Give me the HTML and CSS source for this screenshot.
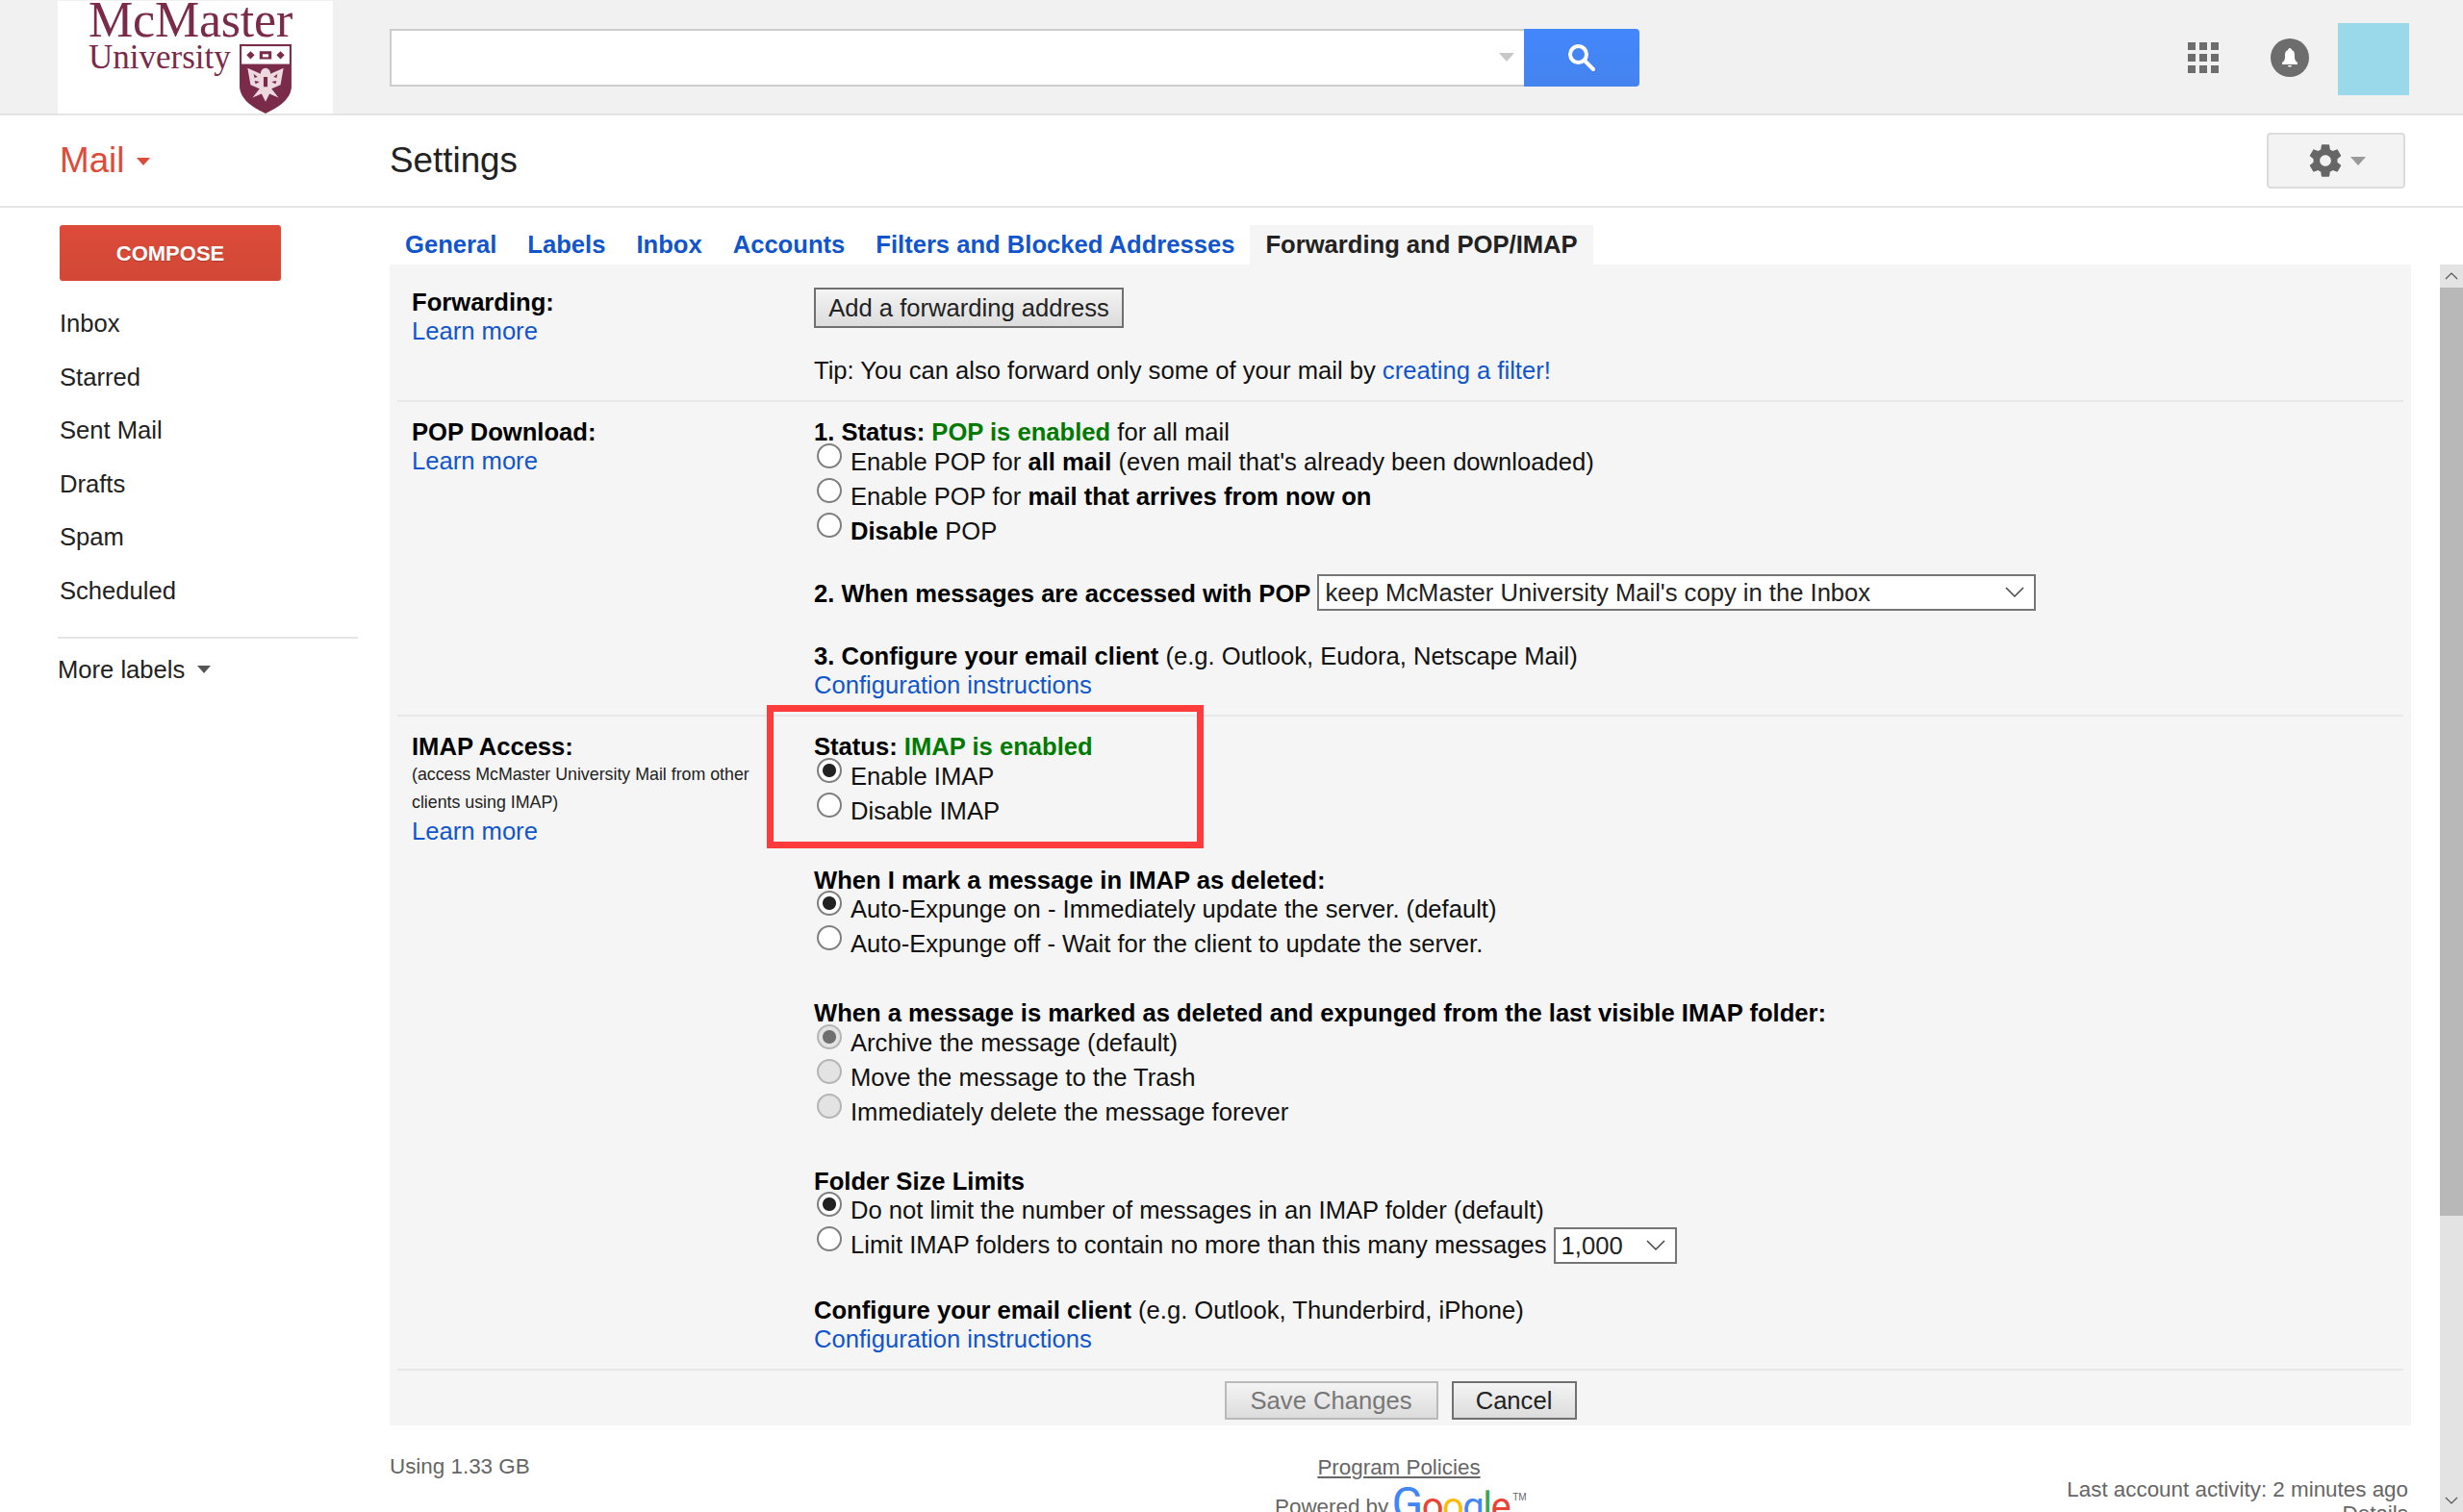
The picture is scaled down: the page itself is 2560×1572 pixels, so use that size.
FILE: index.html
```html
<!DOCTYPE html>
<html lang="en">
<head>
    <meta charset="UTF-8">
    <title>McMaster University Mail - Settings</title>
    <link rel="stylesheet" href="styles.css">
</head>
<body>

<header class="topbar">
    <div class="logo">
        <div class="logo-name">McMaster</div>
        <div class="logo-row">
            <span class="logo-uni">University</span>
            <svg class="logo-shield" width="56" height="74" viewBox="0 0 54 72" preserveAspectRatio="none">
                <path d="M1 1h52v42c0 14-14 22-26 28C15 65 1 57 1 43z" fill="#7a2b4a"/>
                <rect x="3" y="3" width="48" height="18" fill="#fff"/>
                <path d="M8 12l4-4 4 4-4 4zM38 12l4-4 4 4-4 4zM21 8h12v8H21z" fill="#7a2b4a"/>
                <path d="M24 11h6v3h-6z" fill="#fff"/>
                <path d="M27 25c-3 0-5 3-5 6L9 25l3 17 9 4-7 9 9-4 4 8 4-8 9 4-7-9 9-4 3-17-13 6c0-3-2-6-5-6z" fill="#eed8e0"/>
                <path d="M15 31l4 3-3 1zM39 31l-4 3 3 1zM16 38l5 1-4 2zM38 38l-5 1 4 2zM25 34h4v10h-4z" fill="#7a2b4a"/>
            </svg>
        </div>
    </div>
    <div class="search">
        <div class="search-box"><span class="search-arrow"></span></div>
        <div class="search-btn">
            <svg width="32" height="32" viewBox="0 0 32 32" fill="none" stroke="#fff" stroke-width="4">
                <circle cx="12.5" cy="12.5" r="8.5"/>
                <path d="M19 19l9 9" stroke-linecap="round"/>
            </svg>
        </div>
    </div>
    <div class="top-icons">
        <div class="apps">
            <i></i><i></i><i></i><i></i><i></i><i></i><i></i><i></i><i></i>
        </div>
        <svg class="bell" width="40" height="40" viewBox="0 0 40 40">
            <circle cx="20" cy="20" r="20" fill="#6d6d6d"/>
            <path d="M20 10c-1 0-2 1-2 2-3 1-3 4-3 7 0 3-1 5-3 6v2h16v-2c-2-1-3-3-3-6 0-3 0-6-3-7 0-1-1-2-2-2zM18 28h4c0 1-1 1.500-2 1.500s-2-.5-2-1.500z" fill="#fff"/>
        </svg>
        <div class="avatar"></div>
    </div>
</header>

<div class="titlebar">
    <div class="app-name">Mail <span class="app-arrow"></span></div>
    <div class="page-title">Settings</div>
    <div class="gear-btn">
        <svg width="40" height="40" viewBox="0 0 24 24" fill="#666">
            <path d="M19.43 12.98c.04-.32.07-.64.07-.98s-.03-.66-.07-.98l2.11-1.65c.19-.15.24-.42.12-.64l-2-3.46c-.12-.22-.39-.3-.61-.22l-2.49 1c-.52-.4-1.08-.73-1.69-.98l-.38-2.65C14.46 2.18 14.25 2 14 2h-4c-.25 0-.46.18-.49.42l-.38 2.65c-.61.25-1.17.59-1.69.98l-2.49-1c-.23-.09-.49 0-.61.22l-2 3.46c-.13.22-.07.49.12.64l2.11 1.65c-.04.32-.07.65-.07.98s.03.66.07.98l-2.11 1.65c-.19.15-.24.42-.12.64l2 3.46c.12.22.39.3.61.22l2.49-1c.52.4 1.08.73 1.69.98l.38 2.65c.03.24.24.42.49.42h4c.25 0 .46-.18.49-.42l.38-2.65c.61-.25 1.17-.59 1.69-.98l2.49 1c.23.09.49 0 .61-.22l2-3.46c.12-.22.07-.49-.12-.64l-2.11-1.65zM12 15.500c-1.93 0-3.500-1.570-3.500-3.500s1.570-3.500 3.500-3.500 3.500 1.570 3.500 3.500-1.570 3.500-3.500 3.500z"/>
        </svg>
        <span class="gear-arrow"></span>
    </div>
</div>

<div class="main">
    <nav class="sidebar">
        <div class="compose">COMPOSE</div>
        <ul class="labels">
            <li>Inbox</li>
            <li>Starred</li>
            <li>Sent Mail</li>
            <li>Drafts</li>
            <li>Spam</li>
            <li>Scheduled</li>
        </ul>
        <div class="more-labels">More labels <span class="more-arrow"></span></div>
    </nav>

    <div class="content">
        <div class="tabs">
            <a class="tab">General</a>
            <a class="tab">Labels</a>
            <a class="tab">Inbox</a>
            <a class="tab">Accounts</a>
            <a class="tab">Filters and Blocked Addresses</a>
            <a class="tab active">Forwarding and POP/IMAP</a>
        </div>

        <div class="panel">
            <section class="row row-forward">
                <div class="row-label">
                    <b>Forwarding:</b>
                    <a>Learn more</a>
                </div>
                <div class="row-body">
                    <button class="btn btn-add">Add a forwarding address</button>
                    <p class="tip">Tip: You can also forward only some of your mail by <a>creating a filter!</a></p>
                </div>
            </section>

            <section class="row row-pop">
                <div class="row-label">
                    <b>POP Download:</b>
                    <a>Learn more</a>
                </div>
                <div class="row-body">
                    <div class="line pop-status"><b>1. Status: <span class="green">POP is enabled</span></b> for all mail</div>
                    <label class="opt"><input type="radio" name="pop"><span>Enable POP for <b>all mail</b> (even mail that's already been downloaded)</span></label>
                    <label class="opt"><input type="radio" name="pop"><span>Enable POP for <b>mail that arrives from now on</b></span></label>
                    <label class="opt"><input type="radio" name="pop"><span><b>Disable</b> POP</span></label>
                    <div class="line select-line">
                        <b>2. When messages are accessed with POP</b>
                        <select class="sel sel-wide"><option>keep McMaster University Mail's copy in the Inbox</option></select>
                    </div>
                    <div class="line pop-client"><b>3. Configure your email client</b> (e.g. Outlook, Eudora, Netscape Mail)</div>
                    <a class="line">Configuration instructions</a>
                </div>
            </section>

            <section class="row row-imap">
                <div class="row-label">
                    <b>IMAP Access:</b>
                    <small>(access McMaster University Mail from other clients using IMAP)</small>
                    <a>Learn more</a>
                </div>
                <div class="row-body">
                    <div class="head"><b>Status: <span class="green">IMAP is enabled</span></b></div>
                    <label class="opt"><input type="radio" name="imap" checked><span>Enable IMAP</span></label>
                    <label class="opt"><input type="radio" name="imap"><span>Disable IMAP</span></label>

                    <div class="head block-top"><b>When I mark a message in IMAP as deleted:</b></div>
                    <label class="opt"><input type="radio" name="expunge" checked><span>Auto-Expunge on - Immediately update the server. (default)</span></label>
                    <label class="opt"><input type="radio" name="expunge"><span>Auto-Expunge off - Wait for the client to update the server.</span></label>

                    <div class="head block-top"><b>When a message is marked as deleted and expunged from the last visible IMAP folder:</b></div>
                    <label class="opt"><input type="radio" name="del" checked disabled><span>Archive the message (default)</span></label>
                    <label class="opt"><input type="radio" name="del" disabled><span>Move the message to the Trash</span></label>
                    <label class="opt"><input type="radio" name="del" disabled><span>Immediately delete the message forever</span></label>

                    <div class="head folder-top"><b>Folder Size Limits</b></div>
                    <label class="opt"><input type="radio" name="size" checked><span>Do not limit the number of messages in an IMAP folder (default)</span></label>
                    <label class="opt opt-tall"><input type="radio" name="size"><span>Limit IMAP folders to contain no more than this many messages</span>
                        <select class="sel sel-small"><option>1,000</option></select>
                    </label>

                    <div class="line client-top"><b>Configure your email client</b> (e.g. Outlook, Thunderbird, iPhone)</div>
                    <a class="line">Configuration instructions</a>
                </div>
            </section>

            <div class="actions">
                <button class="btn btn-save" disabled>Save Changes</button>
                <button class="btn btn-cancel">Cancel</button>
            </div>
        </div>

        <footer class="footer">
            <div class="foot-left">Using 1.33 GB</div>
            <div class="foot-mid">
                <div class="policies">Program Policies</div>
                <div class="powered">Powered by
                    <span class="google"><span class="g-blue g-cap">G</span><span class="g-red">o</span><span class="g-yellow">o</span><span class="g-blue">g</span><span class="g-green">l</span><span class="g-red">e</span></span><span class="tm">TM</span>
                </div>
            </div>
            <div class="foot-right">
                <div>Last account activity: 2 minutes ago</div>
                <div>Details</div>
            </div>
        </footer>

        <div class="callout"></div>
    </div>

    <div class="scrollbar">
        <div class="scroll-up"><svg width="14" height="10" viewBox="0 0 14 10" fill="none" stroke="#555" stroke-width="1.200"><path d="M1 8l6-6 6 6"/></svg></div>
        <div class="scroll-thumb"></div>
        <div class="scroll-track"></div>
        <div class="scroll-down"><svg width="14" height="10" viewBox="0 0 14 10" fill="none" stroke="#555" stroke-width="1.200"><path d="M1 2l6 6 6-6"/></svg></div>
    </div>
</div>

</body>
</html>
```

FILE: styles.css
```css
html, body {
    margin: 0;
    height: 1572px;
    overflow: hidden;
}
body {
    font-family: "Liberation Sans", Arial, sans-serif;
    font-size: 25.6px;
    line-height: 30px;
    color: #222;
    background: #fff;
}
a {
    color: #1155cc;
}
b {
    color: #000;
}
p {
    margin: 0;
}

/* top bar */
.topbar {
    display: flex;
    height: 118px;
    background: #f1f1f1;
    border-bottom: 2px solid #e5e5e5;
}
.logo {
    width: 286px;
    height: 117px;
    margin: 1px 0 0 60px;
    padding-left: 32px;
    box-sizing: border-box;
    background: #fff;
    color: #7a2b4a;
    font-family: "Liberation Serif", serif;
    overflow: hidden;
}
.logo-name {
    font-size: 52px;
    line-height: 40px;
    letter-spacing: -0.2px;
}
.logo-row {
    display: flex;
    gap: 8px;
    margin-top: 4px;
}
.logo-uni {
    font-size: 35px;
    line-height: 30px;
}
.search {
    display: flex;
    margin: 30px 0 0 59px;
    height: 60px;
}
.search-box {
    position: relative;
    width: 1179px;
    box-sizing: border-box;
    background: #fff;
    border: 2px solid #cdcdcd;
    border-right: none;
}
.search-arrow {
    position: absolute;
    right: 10px;
    top: 23px;
    border-left: 8px solid transparent;
    border-right: 8px solid transparent;
    border-top: 9px solid #c8c8c8;
}
.search-btn {
    display: flex;
    width: 120px;
    align-items: center;
    justify-content: center;
    background: linear-gradient(#4387fd, #4583ee);
    border-radius: 0 4px 4px 0;
}
.top-icons {
    display: flex;
    margin-left: auto;
    margin-right: 56px;
    padding-top: 24px;
}
.apps {
    display: grid;
    grid-template-columns: repeat(3, 8px);
    grid-auto-rows: 8px;
    gap: 4px;
    margin: 20px 54px 0 0;
    height: 32px;
}
.apps i {
    background: #6d6d6d;
}
.bell {
    margin: 16px 30px 0 0;
}
.avatar {
    width: 74px;
    height: 75px;
    background: #9ad9ea;
}

/* title row */
.titlebar {
    display: flex;
    align-items: center;
    height: 94px;
    border-bottom: 2px solid #e5e5e5;
}
.app-name {
    width: 342px;
    margin-left: 62px;
    color: #dd4b39;
    font-size: 36.8px;
    line-height: 40px;
}
.app-arrow {
    display: inline-block;
    margin-left: 2px;
    vertical-align: 7px;
    border-left: 7px solid transparent;
    border-right: 7px solid transparent;
    border-top: 8px solid #dd4b39;
}
.page-title {
    margin-left: 1px;
    color: #222;
    font-size: 36.8px;
    line-height: 40px;
}
.gear-btn {
    display: flex;
    align-items: center;
    justify-content: center;
    gap: 6px;
    width: 144px;
    height: 58px;
    margin-left: auto;
    margin-right: 60px;
    box-sizing: border-box;
    background: #f3f3f3;
    border: 2px solid #dcdcdc;
    border-radius: 4px;
}
.gear-arrow {
    border-left: 8px solid transparent;
    border-right: 8px solid transparent;
    border-top: 9px solid #999;
}

/* sidebar */
.main {
    position: relative;
    display: flex;
}
.sidebar {
    width: 405px;
    flex-shrink: 0;
    box-sizing: border-box;
    padding: 18px 33px 0 60px;
}
.compose {
    width: 230px;
    height: 58px;
    margin-left: 2px;
    background: linear-gradient(#dd4b39, #d14836);
    border-radius: 3px;
    color: #fff;
    font-size: 22px;
    font-weight: bold;
    line-height: 60px;
    text-align: center;
    text-shadow: 0 1px 1px rgba(0, 0, 0, 0.2);
}
.labels {
    list-style: none;
    margin: 17px 0 0;
    padding: 0 0 19.500px 2px;
    border-bottom: 2px solid #e5e5e5;
}
.labels li {
    height: 55.6px;
    line-height: 55.6px;
}
.more-labels {
    margin-top: 17px;
    line-height: 30px;
}
.more-arrow {
    display: inline-block;
    margin-left: 6px;
    vertical-align: 5px;
    border-left: 7px solid transparent;
    border-right: 7px solid transparent;
    border-top: 8px solid #555;
}

/* settings */
.content {
    width: 2101px;
    flex-shrink: 0;
}
.tabs {
    display: flex;
    height: 41px;
    margin-top: 18px;
}
.tab {
    padding: 0 16px;
    color: #1155cc;
    font-weight: bold;
    line-height: 41px;
}
.tab.active {
    color: #222;
    background: #f5f5f5;
}
.panel {
    background: #f5f5f5;
    padding: 0 8px;
    color: #111;
}
.row {
    display: flex;
    border-bottom: 2px solid #e8e8e8;
}
.row-forward {
    padding: 22px 0 16px;
}
.row-forward .row-label {
    padding-top: 2px;
}
.row-pop {
    padding: 16px 0 16px;
}
.row-imap {
    padding: 16px 0 16px;
}
.row-label {
    width: 433px;
    flex-shrink: 0;
    box-sizing: border-box;
    padding: 0 35px 0 15px;
}
.row-label b,
.row-label a,
.row-label small {
    display: block;
}
.row-label small {
    color: #222;
    font-size: 17.800px;
    line-height: 29px;
}
.row-body {
    flex: 1;
}
.line {
    display: block;
    height: 30px;
    line-height: 30px;
}
.pop-status {
    height: 28px;
}
.pop-client {
    margin-top: 32px;
}
/* IMAP headings sit closer to their options than the POP ones */
.head {
    height: 27.500px;
    line-height: 30px;
}
.block-top {
    margin-top: 39px;
}
.folder-top {
    margin-top: 39px;
}
.client-top {
    margin-top: 33px;
}
.green {
    color: #007a00;
}
.tip {
    margin-top: 29px;
}
.opt {
    display: flex;
    align-items: flex-start;
    height: 36px;
    line-height: 36px;
}
.opt-tall {
    height: 38px;
}
.opt input {
    appearance: none;
    width: 26px;
    height: 26px;
    flex-shrink: 0;
    margin: -1px 9px 0 3px;
    box-sizing: border-box;
    background: #fff;
    border: 2px solid #7f7f7f;
    border-radius: 50%;
}
.opt input:checked {
    background: radial-gradient(circle, #222 0 6.500px, #fff 7.500px);
}
.opt input:disabled {
    background: #e3e3e3;
    border-color: #b5b5b5;
}
.opt input:disabled:checked {
    background: radial-gradient(circle, #6f6f6f 0 6.500px, #e3e3e3 7.500px);
}
.select-line {
    display: flex;
    align-items: center;
    gap: 7px;
    height: 38px;
    margin-top: 27px;
}
.select-line b {
    margin-top: 2px;
}
.sel {
    appearance: none;
    height: 38px;
    box-sizing: border-box;
    padding: 0 0 0 6px;
    border: 2px solid #767676;
    border-radius: 0;
    font-family: inherit;
    font-size: 25.6px;
    color: #222;
    background: #fff url("data:image/svg+xml,%3Csvg xmlns='http://www.w3.org/2000/svg' width='20' height='12' fill='none' stroke='%23444' stroke-width='1.500'%3E%3Cpath d='M1 1l9 9 9-9'/%3E%3C/svg%3E") no-repeat right 10px center;
}
.sel-wide {
    width: 747px;
}
.sel-small {
    width: 128px;
    margin: 0 0 0 7px;
}
.actions {
    display: flex;
    justify-content: center;
    gap: 14px;
    height: 57px;
    padding-top: 11px;
    box-sizing: border-box;
}
.btn {
    height: 40px;
    box-sizing: border-box;
    padding: 0;
    background: linear-gradient(#f4f4f4, #dcdcdc);
    border: 2px solid #707070;
    font-family: inherit;
    font-size: 25.6px;
    color: #222;
}
.btn-add {
    display: block;
    width: 322px;
    height: 42px;
    margin-top: 2px;
}
.btn-save {
    width: 222px;
    border-color: #b9b9b9;
    color: #777;
}
.btn-cancel {
    width: 130px;
}

/* footer */
.footer {
    display: grid;
    grid-template-columns: 920px 258px 1fr;
    padding-right: 3px;
    color: #666;
    font-size: 22.400px;
    line-height: 28px;
}
.foot-left {
    padding-top: 29px;
}
.foot-mid {
    padding-top: 30px;
    text-align: center;
}
.policies {
    text-decoration: underline;
}
.powered {
    margin-top: 13px;
    text-align: left;
    white-space: nowrap;
}
.google {
    margin-left: -3px;
    font-family: Roboto, sans-serif;
    font-size: 40px;
    letter-spacing: -1.500px;
    line-height: 0;
    vertical-align: -6px;
}
.g-cap {
    font-size: 48px;
}
.tm {
    font-size: 10px;
    line-height: 0;
    margin-left: 3px;
    vertical-align: 14px;
}
.g-blue {
    color: #4285f4;
}
.g-red {
    color: #ea4335;
}
.g-yellow {
    color: #fbbc05;
}
.g-green {
    color: #34a853;
}
.foot-right {
    padding-top: 54px;
    line-height: 25px;
    text-align: right;
}

/* red box drawn over the screenshot */
.callout {
    position: absolute;
    left: 797px;
    top: 517px;
    width: 454px;
    height: 149px;
    box-sizing: border-box;
    border: 7px solid #ff3b3b;
}

/* fake inner scrollbar */
.scrollbar {
    display: flex;
    flex-direction: column;
    width: 24px;
    height: 1297px;
    margin: 59px 0 0 30px;
    background: #e3e3e3;
}
.scroll-up,
.scroll-down {
    display: flex;
    align-items: center;
    justify-content: center;
    height: 24px;
}
.scroll-thumb {
    height: 965px;
    background: #b8b8b8;
}
.scroll-track {
    flex: 1;
}
```
